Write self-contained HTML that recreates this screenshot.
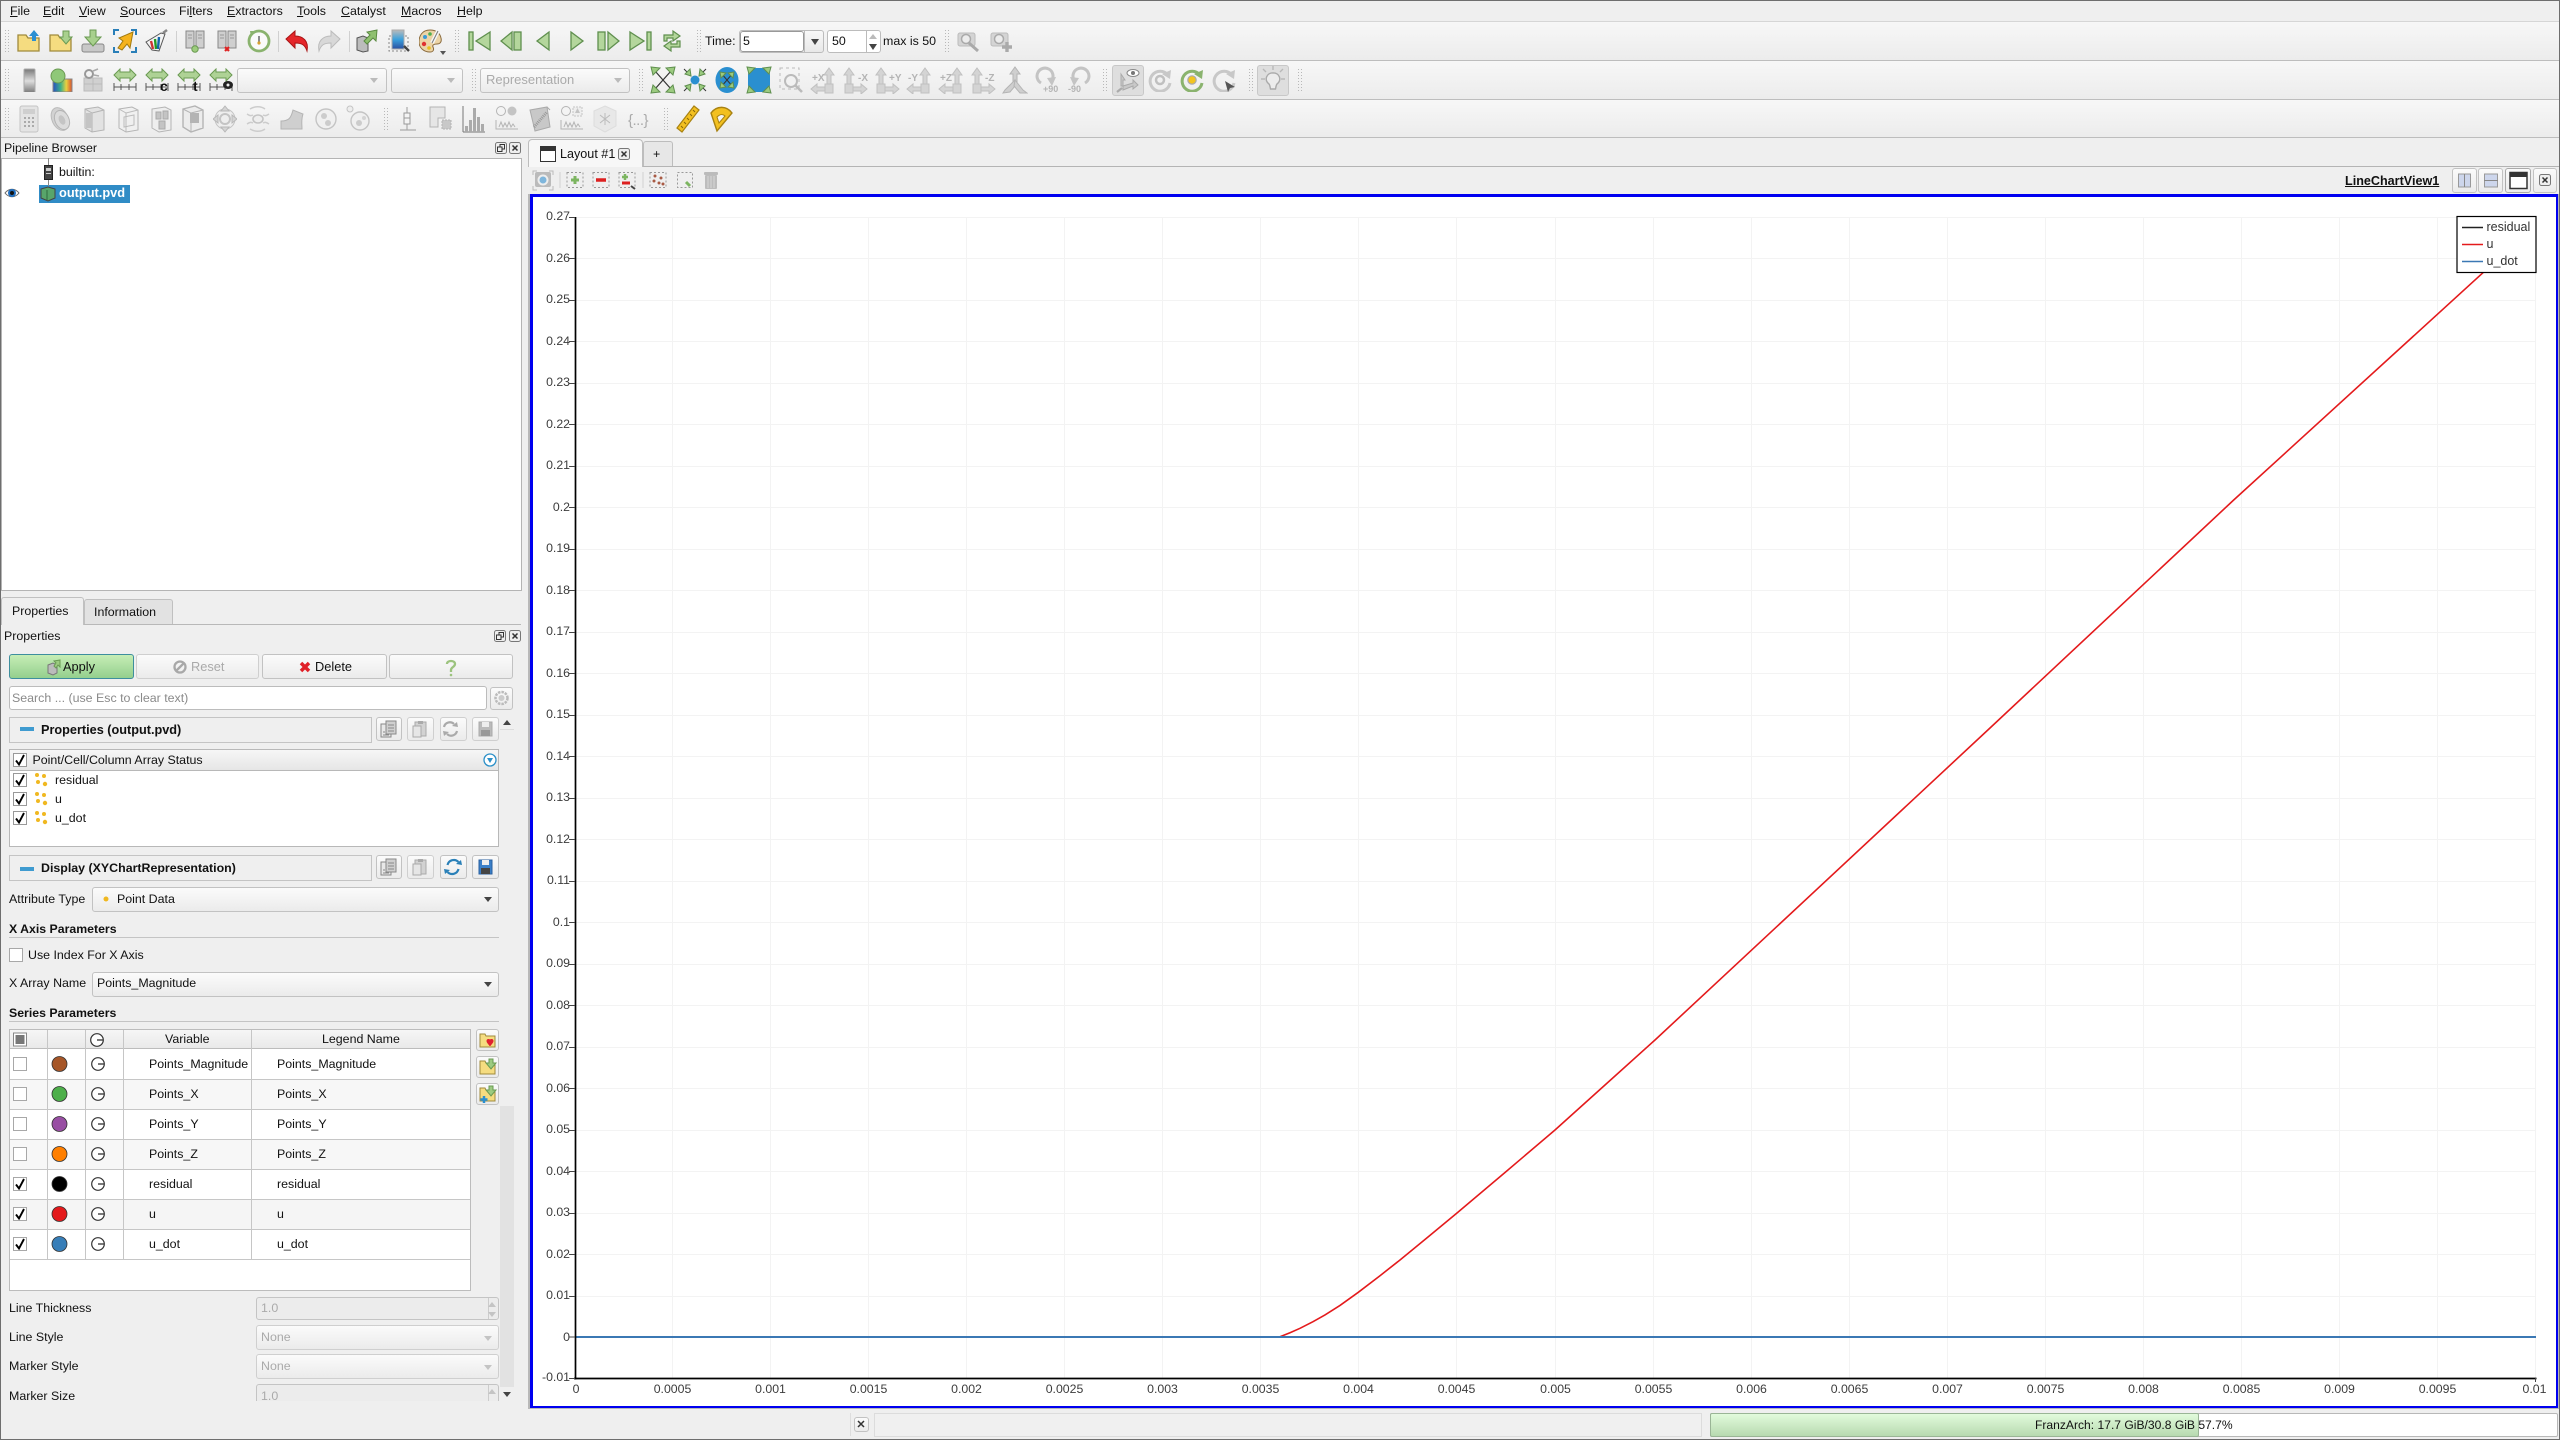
<!DOCTYPE html>
<html><head><meta charset="utf-8"><title>ParaView</title>
<style>
html,body{margin:0;padding:0;background:#efefef}
body{position:relative;width:2560px;height:1440px;overflow:hidden;font:12.4px/16px "Liberation Sans",sans-serif;color:#111}
.t{position:absolute;white-space:pre;line-height:16px}
.g{color:#aaa}
.bd{font-weight:bold;font-size:12.3px}
.b{position:absolute;box-sizing:border-box}
.tb{background:linear-gradient(#f7f7f7,#ececec);border-bottom:1px solid #bdbdbd;left:0;width:2560px}
.btn{border:1px solid #c2c2c2;border-radius:3px;background:linear-gradient(#fbfbfb,#ebebeb)}
.dis{border-color:#cfcfcf}
.ed{background:#fff;border:1px solid #bcbcbc;border-radius:3px}
.chk{background:#fff;border:1px solid #a8a8a8;width:14px;height:14px}
</style></head><body>

<!-- toolbars -->
<div class="b tb" style="top:0;height:22px;background:#efefef;border-bottom:1px solid #d6d6d6"></div>
<div class="b tb" style="top:22px;height:39px"></div>
<div class="b tb" style="top:61px;height:39px"></div>
<div class="b tb" style="top:100px;height:38px"></div>

<!-- toolbar widgets -->
<div class="b ed" style="left:739px;top:30px;width:85px;height:23px;background:linear-gradient(#f8f8f8,#e8e8e8)"></div>
<div class="b ed" style="left:740px;top:31px;width:64px;height:21px;border-color:#999"></div>
<div class="b ed" style="left:827px;top:30px;width:54px;height:23px"></div>
<div class="b btn" style="left:237px;top:68px;width:150px;height:25px"></div>
<div class="b btn" style="left:391px;top:68px;width:72px;height:25px"></div>
<div class="b btn" style="left:480px;top:68px;width:150px;height:25px"></div>
<div class="b" style="left:1112px;top:65px;width:32px;height:31px;background:#dedede;border:1px solid #c8c8c8;border-radius:3px"></div>
<div class="b" style="left:1257px;top:65px;width:32px;height:31px;background:#dedede;border:1px solid #c8c8c8;border-radius:3px"></div>

<!-- pipeline browser -->
<div class="b" style="left:1px;top:158px;width:521px;height:433px;background:#fff;border:1px solid #b4b4b4"></div>
<div class="b" style="left:39px;top:185px;width:91px;height:18px;background:#308cc6"></div>

<!-- central tabs -->
<div class="b" style="left:642px;top:166px;width:1918px;height:1px;background:#b4b4b4"></div>
<div class="b" style="left:528px;top:166px;width:114px;height:1px;background:#f5f5f5"></div>
<div class="b" style="left:528px;top:139px;width:115px;height:28px;background:#f7f7f7;border:1px solid #bdbdbd;border-bottom:0;border-radius:4px 4px 0 0"></div>
<div class="b" style="left:643px;top:141px;width:30px;height:25px;background:#e7e7e7;border:1px solid #bdbdbd;border-bottom:0;border-radius:3px 3px 0 0"></div>
<div class="b btn" style="left:2452px;top:168px;width:25px;height:25px"></div>
<div class="b btn" style="left:2478px;top:168px;width:25px;height:25px"></div>
<div class="b btn" style="left:2505px;top:168px;width:26px;height:25px;border-color:#aaa"></div>
<div class="b btn" style="left:2533px;top:168px;width:24px;height:25px"></div>

<!-- chart -->
<div class="b" style="left:528px;top:194px;width:2031px;height:1215px;background:#b8b8b8;padding:1px"></div>
<div class="b" style="left:530px;top:194px;width:2028px;height:1214px;background:#fff;border:3px solid #0000f0;border-right-width:2px;border-bottom-width:2px"></div>
<svg style="position:absolute;left:0;top:0" width="2560" height="1440" font-family="Liberation Sans, sans-serif">
<path fill="none" stroke="#f3f3f3" stroke-width="1" d="M576 217.5H2536M576 258.5H2536M576 300.5H2536M576 341.5H2536M576 383.5H2536M576 424.5H2536M576 466.5H2536M576 507.5H2536M576 549.5H2536M576 590.5H2536M576 632.5H2536M576 673.5H2536M576 715.5H2536M576 756.5H2536M576 798.5H2536M576 839.5H2536M576 881.5H2536M576 922.5H2536M576 964.5H2536M576 1005.5H2536M576 1047.5H2536M576 1088.5H2536M576 1130.5H2536M576 1171.5H2536M576 1213.5H2536M576 1254.5H2536M576 1296.5H2536
M672.5 217V1378M770.5 217V1378M868.5 217V1378M966.5 217V1378M1064.5 217V1378M1162.5 217V1378M1260.5 217V1378M1358.5 217V1378M1456.5 217V1378M1555.5 217V1378M1653.5 217V1378M1751.5 217V1378M1849.5 217V1378M1947.5 217V1378M2045.5 217V1378M2143.5 217V1378M2241.5 217V1378M2339.5 217V1378M2437.5 217V1378M2535.5 217V1378"/>
<path fill="none" stroke="#e41a1c" stroke-width="1.6" d="M1280 1336.7L1290 1332.7L1300 1328.3L1313 1321.7L1325 1314.9L1340 1305.4L1358.3 1292.3L1380 1275.7L1400 1260L1428 1237L1456.7 1213.3L1505 1172.5L1555 1130L1605 1085L1655 1040L1750 951.6L1990 728L2233.7 500L2483 272.7L2505 252"/>
<rect x="575" y="1336" width="1961" height="2" fill="#3b78b4"/>
<path fill="none" stroke="#000" stroke-width="1.7" d="M575.5 217V1379.5M574 1378.5H2536.5"/>
<path fill="none" stroke="#444" stroke-width="1" d="M569 217.5H575M569 258.5H575M569 300.5H575M569 341.5H575M569 383.5H575M569 424.5H575M569 466.5H575M569 507.5H575M569 549.5H575M569 590.5H575M569 632.5H575M569 673.5H575M569 715.5H575M569 756.5H575M569 798.5H575M569 839.5H575M569 881.5H575M569 922.5H575M569 964.5H575M569 1005.5H575M569 1047.5H575M569 1088.5H575M569 1130.5H575M569 1171.5H575M569 1213.5H575M569 1254.5H575M569 1296.5H575M569 1337H575M569 1378.5H575M2535.5 1378V1382"/>
<g font-size="12.3" fill="#3c3c3c" text-anchor="end">
<text x="570" y="220">0.27</text><text x="570" y="262">0.26</text><text x="570" y="303">0.25</text><text x="570" y="345">0.24</text><text x="570" y="386">0.23</text><text x="570" y="428">0.22</text><text x="570" y="469">0.21</text><text x="570" y="511">0.2</text><text x="570" y="552">0.19</text><text x="570" y="594">0.18</text><text x="570" y="635">0.17</text><text x="570" y="677">0.16</text><text x="570" y="718">0.15</text><text x="570" y="760">0.14</text><text x="570" y="801">0.13</text><text x="570" y="843">0.12</text><text x="570" y="884">0.11</text><text x="570" y="926">0.1</text><text x="570" y="967">0.09</text><text x="570" y="1009">0.08</text><text x="570" y="1050">0.07</text><text x="570" y="1092">0.06</text><text x="570" y="1133">0.05</text><text x="570" y="1175">0.04</text><text x="570" y="1216">0.03</text><text x="570" y="1258">0.02</text><text x="570" y="1299">0.01</text><text x="570" y="1341">0</text><text x="570" y="1381">-0.01</text>
</g>
<g font-size="12.3" fill="#3c3c3c" text-anchor="middle">
<text x="576" y="1393">0</text><text x="672.5" y="1393">0.0005</text><text x="770.5" y="1393">0.001</text><text x="868.5" y="1393">0.0015</text><text x="966.5" y="1393">0.002</text><text x="1064.5" y="1393">0.0025</text><text x="1162.5" y="1393">0.003</text><text x="1260.5" y="1393">0.0035</text><text x="1358.5" y="1393">0.004</text><text x="1456.5" y="1393">0.0045</text><text x="1555.5" y="1393">0.005</text><text x="1653.5" y="1393">0.0055</text><text x="1751.5" y="1393">0.006</text><text x="1849.5" y="1393">0.0065</text><text x="1947.5" y="1393">0.007</text><text x="2045.5" y="1393">0.0075</text><text x="2143.5" y="1393">0.008</text><text x="2241.5" y="1393">0.0085</text><text x="2339.5" y="1393">0.009</text><text x="2437.5" y="1393">0.0095</text><text x="2534.5" y="1393">0.01</text>
</g>
<!-- legend -->
<rect x="2457" y="216.5" width="79" height="56" fill="#fff" stroke="#000" stroke-width="1.2"/>
<path d="M2462 227.5h21" stroke="#222" stroke-width="1.6"/><path d="M2462 244.5h21" stroke="#e41a1c" stroke-width="1.6"/><path d="M2462 261.5h21" stroke="#3b78b4" stroke-width="1.6"/>
<g font-size="12.5" fill="#333"><text x="2486.5" y="231">residual</text><text x="2486.5" y="248">u</text><text x="2486.5" y="265">u_dot</text></g>
</svg>

<!-- status bar -->
<div class="b" style="left:850px;top:1413px;width:1px;height:23px;background:#ddd"></div>
<div class="b btn" style="left:854px;top:1417px;width:15px;height:15px"></div>
<div class="b" style="left:874px;top:1413px;width:828px;height:24px;background:#f0f0f0;border:1px solid #dcdcdc"></div>
<div class="b" style="left:1710px;top:1413px;width:848px;height:24px;background:#fff;border:1px solid #b8b8b8;border-radius:2px"></div>
<div class="b" style="left:1710px;top:1413px;width:489px;height:24px;background:linear-gradient(#e2fbdc,#b7dab0);border:1px solid #9ab596;border-radius:2px"></div>
<div class="t" style="left:2035px;top:1417px;font-size:12.1px">FranzArch: 17.7 GiB/30.8 GiB 57.7%</div>

<!-- properties panel -->
<div class="b" style="left:1px;top:624px;width:520px;height:1px;background:#b8b8b8"></div>
<div class="b" style="left:84px;top:599px;width:89px;height:25px;background:#e2e2e2;border:1px solid #c0c0c0;border-bottom:0;border-radius:3px 3px 0 0"></div>
<div class="b" style="left:1px;top:597px;width:83px;height:28px;background:#efefef;border:1px solid #c0c0c0;border-bottom:0;border-radius:3px 3px 0 0"></div>

<div class="b btn" style="left:9px;top:654px;width:125px;height:25px;background:linear-gradient(#c6eeb6,#94cf8d);border-color:#3e8f9e"></div>
<div class="b btn dis" style="left:136px;top:654px;width:123px;height:25px"></div>
<div class="b btn" style="left:262px;top:654px;width:125px;height:25px"></div>
<div class="b btn" style="left:389px;top:654px;width:124px;height:25px"></div>
<div class="b ed" style="left:9px;top:686px;width:478px;height:24px"></div>
<div class="b btn" style="left:490px;top:687px;width:23px;height:23px"></div>

<div class="b" style="left:9px;top:717px;width:363px;height:26px;background:#efefef;border:1px solid #c4c4c4"></div>
<div class="b btn" style="left:376px;top:717px;width:26px;height:24px"></div>
<div class="b btn dis" style="left:407px;top:717px;width:27px;height:24px"></div>
<div class="b btn dis" style="left:440px;top:717px;width:27px;height:24px"></div>
<div class="b btn dis" style="left:472px;top:717px;width:27px;height:24px"></div>

<div class="b" style="left:9px;top:749px;width:490px;height:98px;background:#fff;border:1px solid #b8b8b8"></div>
<div class="b" style="left:10px;top:750px;width:488px;height:21px;background:linear-gradient(#f6f6f6,#e6e6e6);border-bottom:1px solid #b8b8b8"></div>

<div class="b" style="left:9px;top:855px;width:363px;height:26px;background:#efefef;border:1px solid #c4c4c4"></div>
<div class="b btn" style="left:376px;top:855px;width:26px;height:24px"></div>
<div class="b btn dis" style="left:407px;top:855px;width:27px;height:24px"></div>
<div class="b btn" style="left:440px;top:855px;width:27px;height:24px"></div>
<div class="b btn" style="left:472px;top:855px;width:27px;height:24px"></div>

<div class="b btn" style="left:92px;top:887px;width:407px;height:25px"></div>
<div class="b" style="left:9px;top:937px;width:490px;height:1px;background:#c4c4c4"></div>
<div class="b chk" style="left:9px;top:948px"></div>
<div class="b btn" style="left:92px;top:972px;width:407px;height:25px"></div>
<div class="b" style="left:9px;top:1021px;width:490px;height:1px;background:#c4c4c4"></div>

<!-- scrollbar -->
<div class="b" style="left:500px;top:716px;width:13px;height:685px;background:#efefef"></div>
<div class="b" style="left:500px;top:729px;width:14px;height:1px;background:#dcdcdc"></div>
<div class="b" style="left:500px;top:1106px;width:14px;height:281px;background:#e2e2e2"></div>

<!-- series table -->
<div class="b" style="left:9px;top:1029px;width:462px;height:262px;background:#fff;border:1px solid #bcbcbc"></div>
<div class="b" style="left:10px;top:1030px;width:460px;height:19px;background:linear-gradient(#f6f6f6,#e9e9e9);border-bottom:1px solid #bcbcbc"></div>
<div class="b" style="left:10px;top:1080px;width:460px;height:29px;background:#f7f7f7"></div>
<div class="b" style="left:10px;top:1140px;width:460px;height:29px;background:#f7f7f7"></div>
<div class="b" style="left:10px;top:1200px;width:460px;height:29px;background:#f5f5f5"></div>
<svg style="position:absolute;left:0;top:0" width="520" height="1300">
<path stroke="#c6c6c6" fill="none" d="M47.5 1030V1259M85.5 1030V1259M123.5 1030V1259M251.5 1030V1259M10 1079.5H470M10 1109.5H470M10 1139.5H470M10 1169.5H470M10 1199.5H470M10 1229.5H470M10 1259.5H470"/>
</svg>
<div class="b btn" style="left:476px;top:1029px;width:23px;height:22px"></div>
<div class="b btn" style="left:476px;top:1056px;width:23px;height:22px"></div>
<div class="b btn" style="left:476px;top:1083px;width:23px;height:22px"></div>
<div class="b chk" style="left:13px;top:1057px"></div>
<div class="b chk" style="left:13px;top:1087px"></div>
<div class="b chk" style="left:13px;top:1117px"></div>
<div class="b chk" style="left:13px;top:1147px"></div>
<div class="b chk" style="left:13px;top:1177px"></div>
<div class="b chk" style="left:13px;top:1207px"></div>
<div class="b chk" style="left:13px;top:1237px"></div>

<!-- disabled fields -->
<div class="b btn" style="left:256px;top:1297px;width:243px;height:23px;background:#ececec;border-color:#c4c4c4"></div>
<div class="b btn dis" style="left:256px;top:1325px;width:243px;height:25px"></div>
<div class="b btn dis" style="left:256px;top:1354px;width:243px;height:25px"></div>
<div class="b btn" style="left:256px;top:1384px;width:243px;height:23px;background:#ececec;border-color:#c4c4c4"></div>
<div class="b" style="left:1px;top:1401px;width:520px;height:38px;background:#efefef"></div>

<!-- window frame -->
<div class="b" style="left:0;top:0;width:2560px;height:1440px;border:1px solid #6e6e6e"></div>

<!-- ICONS -->
<svg style="position:absolute;left:0;top:0" width="2560" height="1440" font-family="Liberation Sans, sans-serif">
<defs>
<linearGradient id="gb" x1="0" y1="0" x2="0" y2="1"><stop offset="0" stop-color="#bbb"/><stop offset=".5" stop-color="#3aa0dc"/><stop offset="1" stop-color="#2a4fa0"/></linearGradient>
<linearGradient id="gr" x1="0" y1="0" x2="0" y2="1"><stop offset="0" stop-color="#777"/><stop offset=".5" stop-color="#ddd"/><stop offset="1" stop-color="#777"/></linearGradient>
<linearGradient id="rb" x1="0" y1="0" x2="1" y2="0"><stop offset="0" stop-color="#2a4fc0"/><stop offset=".4" stop-color="#3ab08a"/><stop offset=".7" stop-color="#e8d040"/><stop offset="1" stop-color="#d85030"/></linearGradient>

<symbol id="hd" width="6" height="24" viewBox="0 0 6 24"><path d="M1.5 1V23M4.5 1V23" stroke="#b8b8b8" stroke-dasharray="1 2" fill="none"/></symbol>
<symbol id="oU" width="24" height="24" viewBox="0 0 24 24"><path d="M1 22V6h8l2 3h11v13z" fill="#f5dc80" stroke="#a08a3c" stroke-width="1.3"/><polygon points="17,1 22,7 19,7 19,12 15,12 15,7 12,7" fill="#2b8fd2"/></symbol>
<symbol id="oD" width="24" height="24" viewBox="0 0 24 24"><path d="M1 22V6h8l2 3h11v13z" fill="#f5dc80" stroke="#a08a3c" stroke-width="1.3"/><polygon points="14,2 20,2 20,8 23,8 17,15 11,8 14,8" fill="#a8d08d" stroke="#6a9a52"/></symbol>
<symbol id="sv" width="24" height="24" viewBox="0 0 24 24"><rect x="1" y="15" width="22" height="8" rx="2" fill="#c8c8c8" stroke="#888"/><polygon points="9,1 15,1 15,8 20,8 12,17 4,8 9,8" fill="#a8d08d" stroke="#6a9a52"/></symbol>
<symbol id="cn" width="24" height="24" viewBox="0 0 24 24"><path d="M1 6V1h5M18 1h5v5M1 18v5h5M18 23h5v-5" stroke="#2a7fb8" stroke-width="2" fill="none"/><polygon points="20,3 6,9 10,12 5,19 9,21 14,15 17,19" fill="#f5b31d" stroke="#a07a10"/></symbol>
<symbol id="fl" width="24" height="24" viewBox="0 0 24 24"><polygon points="1,13 16,4 20,5 14,22 7,21" fill="#f4f4f4" stroke="#555"/><path d="M6 12L8 20" stroke="#c33" stroke-width="2.4"/><path d="M10 10L11 20" stroke="#292" stroke-width="2.4"/><path d="M14 8L13 20" stroke="#16a" stroke-width="2.4"/><path d="M18 4L22 1" stroke="#888" stroke-width="2.5"/></symbol>
<symbol id="sg" width="24" height="24" viewBox="0 0 24 24"><rect x="3" y="2" width="8" height="17" fill="#cfcfcf" stroke="#888"/><rect x="13" y="2" width="8" height="17" fill="#cfcfcf" stroke="#888"/><path d="M5 6h4M5 9h4M15 6h4M15 9h4" stroke="#999"/><circle cx="12" cy="20" r="3.2" fill="#9ccc7c" stroke="#6a9a52"/></symbol>
<symbol id="sr" width="24" height="24" viewBox="0 0 24 24"><rect x="3" y="2" width="8" height="17" fill="#cfcfcf" stroke="#888"/><rect x="13" y="2" width="8" height="17" fill="#cfcfcf" stroke="#888"/><path d="M5 6h4M5 9h4M15 6h4M15 9h4" stroke="#999"/><path d="M10 18l4 4M14 18l-4 4" stroke="#d22" stroke-width="2.2"/></symbol>
<symbol id="ck" width="24" height="24" viewBox="0 0 24 24"><circle cx="12" cy="12" r="10" fill="#fafafa" stroke="#8ab36e" stroke-width="2.8"/><path d="M12 7v6" stroke="#666" stroke-width="1.5"/><circle cx="12" cy="14" r="1.6" fill="#d8a030"/><polygon points="3,2 9,2 4,8" fill="#8ab36e"/></symbol>
<symbol id="un" width="24" height="24" viewBox="0 0 24 24"><path d="M1 10L10 2v5c8 0 14 5 12 15-2-6-5-8-12-8v5z" fill="#e5262a" stroke="#a81414"/></symbol>
<symbol id="re" width="24" height="24" viewBox="0 0 24 24"><path d="M23 10L14 2v5C6 7 0 12 2 22c2-6 5-8 12-8v5z" fill="#d8d8d8" stroke="#bbb"/></symbol>
<symbol id="cu" width="24" height="24" viewBox="0 0 24 24"><path d="M3 9l6-2 5 2v13l-5 1-6-2z" fill="#bcbcbc" stroke="#555"/><polygon points="23,1 13,3 16,6 10,12 13,15 19,9 22,12" fill="#8fc06f" stroke="#5a8a40"/></symbol>
<symbol id="gd" width="24" height="24" viewBox="0 0 24 24"><rect x="2" y="7" width="19" height="15" fill="none" stroke="#888" stroke-dasharray="2 2"/><rect x="5" y="1" width="12" height="19" fill="url(#gb)" stroke="#aaa"/><path d="M17 17l5 5" stroke="#444" stroke-width="2.4"/></symbol>
<symbol id="pa" width="24" height="24" viewBox="0 0 24 24"><path d="M11 1C3 1 0 7 0 13c0 6 5 10 11 10 4 0 4-3 3-5s1-3 4-3 5-2 4-6C21 4 17 1 11 1z" fill="#ecd4a6" stroke="#8a6a3c"/><circle cx="6" cy="8" r="2" fill="#3a9ad8"/><circle cx="5" cy="15" r="2.2" fill="#e03030"/><circle cx="10" cy="19" r="1.8" fill="#e8c020"/><circle cx="11" cy="5" r="1.8" fill="#50b050"/><path d="M19 2l-6 12" stroke="#f5f5f5" stroke-width="4"/><path d="M19 2l-6 12" stroke="#777" stroke-width="1" fill="none"/></symbol>

<symbol id="v1" width="24" height="24" viewBox="0 0 24 24"><g fill="#b4d69c" stroke="#5f8f4e" stroke-width="1.3"><rect x="1" y="3" width="4" height="18"/><polygon points="22,3 8,12 22,21"/></g></symbol>
<symbol id="v2" width="24" height="24" viewBox="0 0 24 24"><g fill="#b4d69c" stroke="#5f8f4e" stroke-width="1.3"><polygon points="12,3 1,12 12,21"/><rect x="14" y="3" width="7" height="18"/></g></symbol>
<symbol id="v3" width="24" height="24" viewBox="0 0 24 24"><polygon points="18,3 6,12 18,21" fill="#b4d69c" stroke="#5f8f4e" stroke-width="1.3"/></symbol>
<symbol id="v4" width="24" height="24" viewBox="0 0 24 24"><polygon points="6,3 18,12 6,21" fill="#b4d69c" stroke="#5f8f4e" stroke-width="1.3"/></symbol>
<symbol id="v5" width="24" height="24" viewBox="0 0 24 24"><g fill="#b4d69c" stroke="#5f8f4e" stroke-width="1.3"><rect x="2" y="3" width="7" height="18"/><polygon points="12,3 23,12 12,21"/></g></symbol>
<symbol id="v6" width="24" height="24" viewBox="0 0 24 24"><g fill="#b4d69c" stroke="#5f8f4e" stroke-width="1.3"><polygon points="2,3 16,12 2,21"/><rect x="19" y="3" width="4" height="18"/></g></symbol>
<symbol id="v7" width="24" height="24" viewBox="0 0 24 24"><g fill="#b4d69c" stroke="#5f8f4e" stroke-width="1.2"><path d="M4 12V6h9V2l7 5-7 5V9H7v3z"/><path d="M20 12v6h-9v4l-7-5 7-5v3h6v-3z"/></g></symbol>
<symbol id="cz" width="24" height="24" viewBox="0 0 24 24"><rect x="2" y="4" width="17" height="13" rx="2" fill="#d4d4d4" stroke="#bbb"/><circle cx="10" cy="10" r="4.5" fill="#ececec" stroke="#aaa" stroke-width="1.5"/><path d="M13 14l9 8" stroke="#aaa" stroke-width="3"/></symbol>
<symbol id="cp" width="24" height="24" viewBox="0 0 24 24"><rect x="2" y="4" width="17" height="13" rx="2" fill="#d4d4d4" stroke="#bbb"/><circle cx="10" cy="10" r="4.5" fill="#ececec" stroke="#aaa" stroke-width="1.5"/><path d="M18 13v10M13 18h10" stroke="#aaa" stroke-width="3.4"/></symbol>

<symbol id="cb" width="24" height="24" viewBox="0 0 24 24"><rect x="7" y="1" width="11" height="24" rx="1" fill="url(#gr)" stroke="#aaa"/></symbol>
<symbol id="rn" width="24" height="24" viewBox="0 0 24 24"><rect x="4" y="11" width="19" height="13" fill="url(#rb)" stroke="#888"/><circle cx="9" cy="8" r="7" fill="#8fc878" stroke="#6a9a52"/></symbol>
<symbol id="lk" width="24" height="24" viewBox="0 0 24 24"><rect x="3" y="10" width="18" height="13" fill="#d0d0d0" stroke="#bbb"/><path d="M12 10v13M3 16h18" stroke="#bbb"/><circle cx="8" cy="6" r="4" fill="none" stroke="#999" stroke-width="2"/><path d="M12 3l5-2M13 7l5 1" stroke="#aaa" stroke-width="1.5"/></symbol>
<symbol id="rs" width="24" height="24" viewBox="0 0 24 24"><polygon points="1,7 7,1 7,4 17,4 17,1 23,7 17,13 17,10 7,10 7,13" fill="#aed295" stroke="#6a9a52"/><path d="M1 15v8M1 19h22M23 15v8M8 16v6M16 16v6" stroke="#555" fill="none"/></symbol>

<symbol id="r1" width="26" height="28" viewBox="0 0 26 28"><path d="M5 5L21 23M21 5L5 23" stroke="#333" stroke-width="1.2"/><g fill="#9ccb80" stroke="#5f8f4e"><polygon points="1,1 10,2 3,9"/><polygon points="25,1 16,2 23,9"/><polygon points="1,27 10,26 3,19"/><polygon points="25,27 16,26 23,19"/></g></symbol>
<symbol id="r2" width="26" height="28" viewBox="0 0 26 28"><circle cx="13" cy="14" r="4.5" fill="#2a8fd0"/><path d="M2 3l7 7M24 3l-7 7M2 25l7-7M24 25l-7-7" stroke="#333"/><g fill="#9ccb80" stroke="#5f8f4e"><polygon points="9,10 8,3 3,8"/><polygon points="17,10 18,3 23,8"/><polygon points="9,18 8,25 3,20"/><polygon points="17,18 18,25 23,20"/></g></symbol>
<symbol id="r3" width="26" height="28" viewBox="0 0 26 28"><ellipse cx="13" cy="14" rx="11.5" ry="13" fill="#2a8fd0"/><path d="M7 7l12 14M19 7L7 21" stroke="#333"/><g fill="#9ccb80" stroke="#5f8f4e"><polygon points="6,6 12,7 7,12"/><polygon points="20,6 14,7 19,12"/><polygon points="6,22 12,21 7,16"/><polygon points="20,22 14,21 19,16"/></g></symbol>
<symbol id="r4" width="26" height="28" viewBox="0 0 26 28"><rect x="2" y="2" width="22" height="24" rx="7" fill="#2a8fd0"/><g fill="#9ccb80" stroke="#5f8f4e"><polygon points="1,1 9,2 3,8"/><polygon points="25,1 17,2 23,8"/><polygon points="1,27 9,26 3,20"/><polygon points="25,27 17,26 23,20"/></g></symbol>
<symbol id="r5" width="26" height="28" viewBox="0 0 26 28"><rect x="1" y="2" width="19" height="21" fill="none" stroke="#bbb" stroke-dasharray="3 3"/><circle cx="12" cy="15" r="6" fill="#f2f2f2" stroke="#bbb" stroke-width="2"/><path d="M16 19l7 7" stroke="#bbb" stroke-width="2.6"/></symbol>
<symbol id="ar" width="26" height="28" viewBox="0 0 26 28"><g fill="#d4d4d4" stroke="#c0c0c0"><polygon points="19,2 24,9 21,9 21,19 17,19 17,9 14,9"/><rect x="15" y="18" width="8" height="9"/><polygon points="1,23 7,18 7,21 15,21 15,25 7,25 7,28"/></g></symbol>
<symbol id="am" width="26" height="28" viewBox="0 0 26 28"><g fill="#d4d4d4" stroke="#c0c0c0"><polygon points="7,2 12,9 9,9 9,19 5,19 5,9 2,9"/><rect x="3" y="18" width="8" height="9"/><polygon points="25,23 19,18 19,21 11,21 11,25 19,25 19,28"/></g></symbol>
<symbol id="a3" width="26" height="28" viewBox="0 0 26 28"><g fill="#cfcfcf" stroke="#b4b4b4"><polygon points="13,1 18,8 15,8 15,16 11,16 11,8 8,8"/><polygon points="13,14 3,24 1,27 8,26 13,20"/><polygon points="13,14 21,24 25,27 18,27 12,20"/></g></symbol>
<symbol id="p9" width="26" height="28" viewBox="0 0 26 28"><path d="M7 17a8 8 0 1 1 11-3" fill="none" stroke="#c4c4c4" stroke-width="3"/><polygon points="13,12 22,11 18,20" fill="#c4c4c4"/></symbol>
<symbol id="m9" width="26" height="28" viewBox="0 0 26 28"><path d="M19 17a8 8 0 1 0-11-3" fill="none" stroke="#c4c4c4" stroke-width="3"/><polygon points="13,12 4,11 8,20" fill="#c4c4c4"/></symbol>
<symbol id="ro" width="24" height="24" viewBox="0 0 24 24"><path d="M20 7a10 10 0 1 0 2 8" fill="none" stroke="#c8c8c8" stroke-width="3"/><circle cx="12" cy="12" r="4" fill="none" stroke="#c0c0c0" stroke-width="2.5"/><polygon points="14,6 23,2 22,11" fill="#c8c8c8"/></symbol>
<symbol id="rg" width="24" height="24" viewBox="0 0 24 24"><path d="M20 7a10 10 0 1 0 2 8" fill="none" stroke="#8ab36e" stroke-width="3"/><circle cx="12" cy="12" r="4.2" fill="#f2c420" stroke="#aaa" stroke-width="1.2"/><polygon points="14,6 23,2 22,11" fill="#8ab36e"/></symbol>
<symbol id="rc" width="24" height="24" viewBox="0 0 24 24"><path d="M20 7a10 10 0 1 0 2 8" fill="none" stroke="#c8c8c8" stroke-width="3"/><polygon points="14,6 23,2 22,11" fill="#c8c8c8"/><polygon points="13,13 23,19 18,20 16,24" fill="#555"/></symbol>
<symbol id="bl" width="24" height="28" viewBox="0 0 24 28"><path d="M12 7a6 6 0 0 0-4 11c1 1 1 3 1.500 5h5c.5-2 .5-4 1.500-5a6 6 0 0 0-4-11z" fill="#ececec" stroke="#aaa" stroke-width="1.400"/><path d="M12 0v4M2 3l3 3M22 3l-3 3M0 13h4M24 13h-4" stroke="#b8b8b8" stroke-width="1.400"/></symbol>
<symbol id="ve" width="26" height="28" viewBox="0 0 26 28"><g fill="#c8c8c8" stroke="#aaa"><polygon points="6,8 10,14 8,14 8,20 6,20"/><polygon points="8,20 18,17 18,14 23,19 18,23 18,20 8,24"/><path d="M7 22L2 26" stroke-width="2.2"/></g><ellipse cx="18" cy="7" rx="6" ry="3.500" fill="#fff" stroke="#888"/><circle cx="18" cy="7" r="2" fill="#777"/></symbol>

<symbol id="f1" width="24" height="28" viewBox="0 0 24 28"><rect x="3" y="1" width="18" height="26" rx="2" fill="#e4e4e4" stroke="#c4c4c4"/><rect x="6" y="4" width="12" height="5" fill="#cfcfcf"/><path d="M7 13h2M11 13h2M15 13h2M7 17h2M11 17h2M15 17h2M7 21h2M11 21h2M15 21h2" stroke="#aaa" stroke-width="2"/></symbol>
<symbol id="f2" width="24" height="28" viewBox="0 0 24 28"><ellipse cx="11" cy="14" rx="8" ry="12" fill="#d2d2d2" stroke="#bbb" transform="rotate(-25 11 14)"/><ellipse cx="13" cy="15" rx="7" ry="10" fill="#dcdcdc" stroke="#b4b4b4" transform="rotate(-25 13 15)"/><ellipse cx="13" cy="15" rx="3" ry="5" fill="#c4c4c4" transform="rotate(-25 13 15)"/></symbol>
<symbol id="f3" width="24" height="28" viewBox="0 0 24 28"><path d="M3 4l13-2 6 3v20l-12 2-7-4z" fill="#e2e2e2" stroke="#b4b4b4"/><path d="M3 4l7 4v19M10 8l12-3" fill="none" stroke="#b4b4b4"/><rect x="4" y="8" width="6" height="15" fill="#c4c4c4"/></symbol>
<symbol id="f4" width="24" height="28" viewBox="0 0 24 28"><path d="M3 4l13-2 6 3v20l-12 2-7-4z" fill="#f0f0f0" stroke="#b4b4b4"/><path d="M3 4l7 4v19M10 8l12-3M8 12l10-2v10l-10 2z" fill="none" stroke="#bbb"/></symbol>
<symbol id="f5" width="24" height="28" viewBox="0 0 24 28"><path d="M3 4l13-2 6 3v20l-12 2-7-4z" fill="#eee" stroke="#b4b4b4"/><path d="M7 7h5v7H7zM14 6h5v8h-5zM10 16h6v8h-6z" fill="#c4c4c4" stroke="#aaa"/></symbol>
<symbol id="f6" width="24" height="28" viewBox="0 0 24 28"><path d="M2 4l12-3 8 4v18l-12 4-8-5z" fill="#ececec" stroke="#b4b4b4" stroke-width="1.400"/><rect x="9" y="8" width="9" height="10" fill="#b4b4b4"/><path d="M2 4l8 4v19M10 8l12-3" fill="none" stroke="#b4b4b4"/></symbol>
<symbol id="f7" width="24" height="28" viewBox="0 0 24 28"><circle cx="12" cy="14" r="10" fill="#eee" stroke="#c4c4c4"/><path d="M12 1l4 5h-8zM12 27l4-5H8zM0 14l5-4v8zM24 14l-5-4v8z" fill="#d4d4d4" stroke="#b8b8b8"/><circle cx="12" cy="14" r="5" fill="none" stroke="#c4c4c4" stroke-width="2"/></symbol>
<symbol id="f8" width="24" height="28" viewBox="0 0 24 28"><ellipse cx="12" cy="14" rx="5" ry="4" fill="#eee" stroke="#c4c4c4" stroke-width="1.600"/><path d="M4 4c5-3 11-3 15 0M1 9c3 2 4 2 6 1M17 10c2 1 3 1 6-1M1 19c3-2 4-2 6-1M17 18c2-1 3-1 6 1M4 24c5 3 11 3 15 0" fill="none" stroke="#ccc" stroke-width="1.500"/></symbol>
<symbol id="f9" width="24" height="28" viewBox="0 0 24 28"><path d="M1 24V16c8 0 10-3 12-11l10 4c-2 6-1 10-1 15z" fill="#cfcfcf" stroke="#b4b4b4"/></symbol>
<symbol id="fa" width="24" height="28" viewBox="0 0 24 28"><circle cx="12" cy="14" r="10" fill="#f0f0f0" stroke="#c4c4c4" stroke-width="1.400"/><circle cx="10" cy="11" r="3" fill="#ccc"/><circle cx="14" cy="18" r="3" fill="#ccc"/></symbol>
<symbol id="fb" width="24" height="28" viewBox="0 0 24 28"><circle cx="14" cy="16" r="9" fill="#f0f0f0" stroke="#c4c4c4" stroke-width="1.400"/><circle cx="13" cy="18" r="3" fill="#ccc"/><circle cx="4" cy="4" r="3" fill="#eee" stroke="#c4c4c4"/><circle cx="18" cy="13" r="2" fill="#d4d4d4"/></symbol>
<symbol id="fc" width="24" height="28" viewBox="0 0 24 28"><path d="M5 25H21M12 2V25" stroke="#aaa" stroke-width="1.200"/><rect x="9" y="8" width="6" height="11" fill="#f4f4f4" stroke="#999"/><path d="M9 13h6" stroke="#999"/></symbol>
<symbol id="fd" width="24" height="28" viewBox="0 0 24 28"><path d="M2 2h15v11h-7v9H2z" fill="#e6e6e6" stroke="#b4b4b4"/><rect x="14" y="15" width="9" height="9" fill="#c8c8c8" stroke="#b4b4b4" stroke-dasharray="2 1"/></symbol>
<symbol id="fe" width="24" height="28" viewBox="0 0 24 28"><path d="M1 27V1M1 27H23" stroke="#777"/><g fill="#aaa"><rect x="3" y="21" width="3" height="6"/><rect x="7" y="15" width="3" height="12"/><rect x="11" y="3" width="3" height="24"/><rect x="15" y="12" width="3" height="15"/><rect x="19" y="19" width="3" height="8"/></g></symbol>
<symbol id="ff" width="24" height="28" viewBox="0 0 24 28"><circle cx="6" cy="6" r="4.500" fill="#f4f4f4" stroke="#b4b4b4"/><circle cx="17" cy="6" r="4.500" fill="#c4c4c4"/><path d="M1 15V24H23M4 22l2-5 2 5 2-4 2 4 2-5 2 5 2-3 2 3" fill="none" stroke="#b4b4b4"/></symbol>
<symbol id="fg" width="24" height="28" viewBox="0 0 24 28"><path d="M2 5l17-3 3 20-15 4z" fill="#c8c8c8" stroke="#aaa"/><path d="M6 22L19 7" stroke="#999" stroke-width="3" stroke-dasharray="1 1"/><path d="M19 2l3 3" stroke="#aaa"/></symbol>
<symbol id="fh" width="24" height="28" viewBox="0 0 24 28"><circle cx="6" cy="6" r="4.500" fill="#f4f4f4" stroke="#b4b4b4"/><rect x="13" y="2" width="9" height="9" fill="#eee" stroke="#c4c4c4" stroke-dasharray="2 1"/><polygon points="17.500,3 20,8 15,8" fill="#c4c4c4"/><path d="M1 15V24H23M4 22l2-5 2 5 2-4 2 4 2-5 2 5 2-3 2 3" fill="none" stroke="#b4b4b4"/></symbol>
<symbol id="fi" width="24" height="28" viewBox="0 0 24 28"><polygon points="12,1 23,6 23,21 12,27 1,21 1,6" fill="#e8e8e8" stroke="#ddd"/><path d="M12 8v12M7 10l10 8M17 10L7 18" stroke="#bbb"/></symbol>
<symbol id="ru" width="24" height="28" viewBox="0 0 24 28"><polygon points="18,1 23,5 6,27 1,23" fill="#f3c020" stroke="#a88212" stroke-width="1.200"/><path d="M17 5l2 2M14 9l2 2M11 13l2 2M8 17l2 2M5 21l2 2" stroke="#87660a"/></symbol>
<symbol id="pr" width="24" height="28" viewBox="0 0 24 28"><path d="M2 8C8 0 18 1 23 8L8 26z" fill="#f3c020" stroke="#a88212" stroke-width="1.400"/><path d="M8 12c3-3 6-3 8-1l-6 7z" fill="#f4f4f4" stroke="#a88212"/></symbol>

<symbol id="ws" width="12" height="12" viewBox="0 0 12 12"><rect x=".5" y=".5" width="11" height="11" rx="2" fill="#eee" stroke="#777"/><path d="M3.500 3.500l5 5M8.500 3.500l-5 5" stroke="#333" stroke-width="1.500"/></symbol>
<symbol id="wf" width="12" height="12" viewBox="0 0 12 12"><rect x=".5" y=".5" width="11" height="11" rx="2" fill="#eee" stroke="#777"/><rect x="5" y="2.500" width="4.500" height="4.500" fill="none" stroke="#333"/><rect x="2.500" y="5" width="4.500" height="4.500" fill="#eee" stroke="#333"/></symbol>
<symbol id="cm" width="14" height="14" viewBox="0 0 14 14"><path d="M3 7.500l3 4L11 2" fill="none" stroke="#000" stroke-width="1.900"/></symbol>
<symbol id="dt" width="16" height="16" viewBox="0 0 16 16"><g fill="#f0b820"><circle cx="3" cy="3" r="2"/><circle cx="10" cy="4" r="2"/><circle cx="4" cy="10" r="2"/><circle cx="11" cy="12" r="2.200"/></g></symbol>
<symbol id="se" width="16" height="16" viewBox="0 0 16 16"><circle cx="8" cy="8" r="6.300" fill="#fff" stroke="#333" stroke-width="1.200"/><path d="M8 8h6" stroke="#333" stroke-width="1.300"/></symbol>
<symbol id="cpy" width="18" height="18" viewBox="0 0 18 18"><rect x="1" y="4" width="10" height="13" fill="#e8e8e8" stroke="#888"/><rect x="6" y="1" width="10" height="13" fill="#cfcfcf" stroke="#888"/><path d="M8 5h6M8 8h6M8 11h6M3 12h2M3 15h6" stroke="#888"/></symbol>
<symbol id="pst" width="18" height="18" viewBox="0 0 18 18"><rect x="3" y="2" width="11" height="14" fill="#d2d2d2" stroke="#aaa"/><rect x="6" y="1" width="5" height="3" fill="#aaa"/><rect x="1" y="6" width="8" height="11" fill="#e6e6e6" stroke="#aaa"/></symbol>
</defs>

<!-- row 1 -->
<use href="#hd" x="4" y="29"/>
<use href="#oU" x="17" y="29"/><use href="#oD" x="49" y="29"/><use href="#sv" x="81" y="29"/><use href="#cn" x="113" y="29"/><use href="#fl" x="145" y="29"/>
<path d="M176.500 31V52M278.500 31V52M349.500 31V52" stroke="#d0d0d0"/>
<use href="#sg" x="183" y="29"/><use href="#sr" x="215" y="29"/><use href="#ck" x="247" y="29"/>
<use href="#un" x="285" y="29"/><use href="#re" x="317" y="29"/>
<use href="#cu" x="354" y="29"/><use href="#gd" x="387" y="29"/><use href="#pa" x="419" y="29"/>
<polygon points="440,51 446,51 443,55" fill="#555"/>
<use href="#hd" x="454" y="29"/>
<use href="#v1" x="468" y="29"/><use href="#v2" x="500" y="29"/><use href="#v3" x="531" y="29"/><use href="#v4" x="565" y="29"/><use href="#v5" x="596" y="29"/><use href="#v6" x="628" y="29"/><use href="#v7" x="660" y="29"/>
<use href="#hd" x="696" y="29"/>
<polygon points="811,39 819,39 815,45" fill="#444"/>
<polygon points="869,39 877,39 873,34" fill="#bbb"/><polygon points="869,44 877,44 873,50" fill="#444"/>
<path d="M804.500 31V52M866.500 31V52" stroke="#bbb"/>
<use href="#hd" x="944" y="29"/>
<use href="#cz" x="956" y="29"/><use href="#cp" x="989" y="29"/>

<!-- row 2 -->
<use href="#hd" x="4" y="68"/>
<use href="#cb" x="17" y="68"/><use href="#rn" x="49" y="68"/><use href="#lk" x="81" y="68"/>
<use href="#rs" x="113" y="68"/><use href="#rs" x="145" y="68"/><use href="#rs" x="177" y="68"/><use href="#rs" x="209" y="68"/>
<text x="160" y="91" font-size="14" font-weight="bold" fill="#111">c</text><text x="193" y="91" font-size="14" font-weight="bold" fill="#111">t</text>
<ellipse cx="228" cy="85" rx="5" ry="4" fill="#222"/><circle cx="228" cy="85" r="1.500" fill="#eee"/>
<polygon points="370,78 378,78 374,83" fill="#bbb"/><polygon points="447,78 455,78 451,83" fill="#bbb"/><polygon points="614,78 622,78 618,83" fill="#bbb"/>
<use href="#hd" x="471" y="68"/><use href="#hd" x="638" y="68"/>
<use href="#r1" x="650" y="66"/><use href="#r2" x="682" y="66"/><use href="#r3" x="714" y="66"/><use href="#r4" x="746" y="66"/><use href="#r5" x="779" y="66"/>
<use href="#ar" x="810" y="66"/><use href="#am" x="842" y="66"/><use href="#am" x="874" y="66"/><use href="#ar" x="906" y="66"/><use href="#ar" x="938" y="66"/><use href="#am" x="970" y="66"/><use href="#a3" x="1002" y="66"/><use href="#p9" x="1034" y="66"/><use href="#m9" x="1066" y="66"/>
<g font-size="10" fill="#b4b4b4" font-weight="bold">
<text x="812" y="81">+X</text><text x="858" y="81">-X</text><text x="889" y="81">+Y</text><text x="908" y="81">-Y</text><text x="940" y="81">+Z</text><text x="985" y="81">-Z</text>
<text x="1043" y="92" font-size="9">+90</text><text x="1068" y="92" font-size="9">-90</text></g>
<use href="#hd" x="1102" y="68"/>
<use href="#ve" x="1115" y="66"/><use href="#ro" x="1148" y="68"/><use href="#rg" x="1180" y="68"/><use href="#rc" x="1212" y="68"/>
<use href="#hd" x="1248" y="68"/><use href="#bl" x="1261" y="66"/><use href="#hd" x="1297" y="68"/>

<!-- row 3 -->
<use href="#hd" x="4" y="107"/>
<use href="#f1" x="17" y="105"/><use href="#f2" x="49" y="105"/><use href="#f3" x="82" y="105"/><use href="#f4" x="116" y="105"/><use href="#f5" x="149" y="105"/><use href="#f6" x="181" y="105"/><use href="#f7" x="213" y="105"/><use href="#f8" x="246" y="105"/><use href="#f9" x="280" y="105"/><use href="#fa" x="314" y="105"/><use href="#fb" x="346" y="105"/>
<use href="#hd" x="383" y="107"/>
<use href="#fc" x="395" y="105"/><use href="#fd" x="428" y="105"/><use href="#fe" x="462" y="105"/><use href="#ff" x="495" y="105"/><use href="#fg" x="528" y="105"/><use href="#fh" x="560" y="105"/><use href="#fi" x="593" y="105"/>
<text x="628" y="125" font-size="15" fill="#aaa" letter-spacing="-.5">{...}</text>
<use href="#hd" x="663" y="107"/>
<use href="#ru" x="676" y="105"/><use href="#pr" x="709" y="105"/>

<!-- dock title icons -->
<use href="#wf" x="495" y="142"/><use href="#ws" x="509" y="142"/>
<use href="#wf" x="494" y="630"/><use href="#ws" x="509" y="630"/>

<!-- pipeline tree -->
<path d="M48.500 158V165M48.500 179V186" stroke="#888"/>
<rect x="44.500" y="165.500" width="8" height="14" fill="#444" stroke="#222"/><rect x="46" y="168" width="5" height="3" fill="#ccc"/><rect x="46" y="173" width="5" height="1" fill="#ccc"/>
<path d="M41 189l7-2 7 2v9l-7 3-7-3z" fill="#58a56a" stroke="#444"/><path d="M47 190v10" stroke="#2e6a40"/>
<path d="M5 193c4-5 10-5 14 0-4 5-10 5-14 0z" fill="#fff" stroke="#666"/><circle cx="12" cy="193" r="4" fill="#2270c0"/><circle cx="12" cy="193" r="2" fill="#111"/>

<!-- layout tab -->
<rect x="540.500" y="146.500" width="15" height="15" fill="#fff" stroke="#333"/><rect x="540" y="146" width="16" height="5" fill="#333"/>
<use href="#ws" x="618" y="148"/>
<!-- view toolbar -->
<g>
<rect x="535" y="172" width="16" height="15" rx="2" fill="#bbb"/><circle cx="543" cy="180" r="4.500" fill="#7fb6dc" stroke="#eee" stroke-width="2"/><path d="M533 175v-4h4M549 171h4v4M533 186v4h4M549 190h4v-4" stroke="#bbb" fill="none"/>
<path d="M560 172V188M643 172V188" stroke="#d0d0d0"/>
<g fill="none" stroke="#999" stroke-dasharray="2 2"><rect x="567" y="172.500" width="16" height="15"/><rect x="593" y="172.500" width="16" height="15"/><rect x="619" y="172.500" width="16" height="15"/><rect x="650" y="172.500" width="16" height="15"/><rect x="677.500" y="172.500" width="15" height="15"/></g>
<path d="M575 176v8M571 180h8" stroke="#7cb560" stroke-width="3"/>
<path d="M596 180h10" stroke="#dd2020" stroke-width="3.500"/>
<path d="M625 174v6M622 177h6" stroke="#7cb560" stroke-width="2.500"/><path d="M622 183h8" stroke="#dd2020" stroke-width="3"/><path d="M631 186l4 3" stroke="#444" stroke-width="2"/>
<g fill="#a85a44"><circle cx="655" cy="176" r="1.500"/><circle cx="661" cy="178" r="1.500"/><circle cx="654" cy="181" r="1.500"/><circle cx="659" cy="183" r="1.500"/><circle cx="663" cy="184" r="1.500"/></g>
<path d="M686 182l4 4" stroke="#7cb560" stroke-width="3"/>
<rect x="705" y="175" width="12" height="14" rx="1" fill="#bdbdbd"/><rect x="704" y="172" width="14" height="3" rx="1" fill="#bbb"/><path d="M708 176v12M711 176v12M714 176v12" stroke="#d8d8d8"/>
</g>
<!-- view buttons -->
<rect x="2458.500" y="174" width="12" height="13" fill="#cdd6ec" stroke="#999"/><path d="M2464.500 174v13" stroke="#888"/>
<rect x="2484.500" y="174" width="13" height="13" fill="#cdd6ec" stroke="#999"/><path d="M2484 180.500h14" stroke="#888"/>
<rect x="2510" y="172.500" width="17" height="16" fill="#fff" stroke="#333" stroke-width="1.500"/><rect x="2510" y="172" width="17" height="5" fill="#333"/>
<use href="#ws" x="2539" y="174"/>

<!-- props -->
<g transform="translate(47,659)"><path d="M1 6l5-2 4 2v8l-4 2-5-2z" fill="#bbb" stroke="#777"/><polygon points="13,1 7,2 9,4 7,7 9,9 11,6 13,8" fill="#9ccb80" stroke="#6a9a52"/></g>
<circle cx="180" cy="667" r="5.500" fill="none" stroke="#a8a8a8" stroke-width="2.300"/><path d="M176 671l8-8" stroke="#a8a8a8" stroke-width="2.300"/>
<path d="M301 663l8 8M309 663l-8 8" stroke="#e02028" stroke-width="3.500"/>
<path d="M447 664c0-4 8-4 8 0 0 3-4 3-4 6v2" fill="none" stroke="#9cc37e" stroke-width="2.300"/><circle cx="451" cy="675" r="1.300" fill="#9cc37e"/>
<g transform="translate(-1 0)"><circle cx="502.500" cy="698" r="6" fill="none" stroke="#bbb" stroke-width="2.500" stroke-dasharray="2.500 1"/><circle cx="502.500" cy="698" r="3" fill="#ccc"/></g>

<rect x="20" y="727" width="14" height="4" fill="#3f9bd0"/><rect x="20" y="867" width="14" height="4" fill="#3f9bd0"/>
<g transform="translate(-1 0)"><use href="#cpy" x="381" y="720"/><use href="#pst" x="413" y="720"/>
<path d="M455 724a6 6 0 0 0-10 3M448 734a6 6 0 0 0 10-3" fill="none" stroke="#aaa" stroke-width="2.200"/><polygon points="453,726 458,722 459,727" fill="#aaa"/><polygon points="450,732 445,736 444,731" fill="#aaa"/>
<rect x="480" y="722" width="13" height="14" fill="#bbb" stroke="#aaa"/><rect x="483" y="722" width="7" height="5" fill="#eee"/><rect x="482" y="730" width="9" height="6" fill="#999"/>
<use href="#cpy" x="381" y="858"/><use href="#pst" x="413" y="858"/>
<path d="M460 862a6.500 6.500 0 0 0-11 3M449 872a6.500 6.500 0 0 0 11-3" fill="none" stroke="#2a80b8" stroke-width="2.200" transform="translate(-.5 0)"/><polygon points="457,864 462,860 463,865" fill="#2a80b8"/><polygon points="451,870 446,874 445,869" fill="#2a80b8"/>
<rect x="480" y="860" width="13" height="14" fill="#3a7fc8" stroke="#2a60a0"/><rect x="483" y="860" width="7" height="5" fill="#eee"/><rect x="482" y="868" width="9" height="6" fill="#444"/></g>

<polygon points="503,725 511,725 507,720" fill="#444"/>
<polygon points="503,1392 511,1392 507,1397" fill="#444"/>

<!-- array list -->
<rect x="13.500" y="753.500" width="13" height="13" fill="#fff" stroke="#999"/><use href="#cm" x="13" y="753"/>
<circle cx="490" cy="760" r="6" fill="#fff" stroke="#2c90c8" stroke-width="1.300"/><polygon points="487,758 493,758 490,763" fill="#2c90c8"/>
<rect x="13.500" y="773.500" width="13" height="13" fill="#fff" stroke="#999"/><use href="#cm" x="13" y="773"/>
<rect x="13.500" y="792.500" width="13" height="13" fill="#fff" stroke="#999"/><use href="#cm" x="13" y="792"/>
<rect x="13.500" y="811.500" width="13" height="13" fill="#fff" stroke="#999"/><use href="#cm" x="13" y="811"/>
<use href="#dt" x="34" y="772"/><use href="#dt" x="34" y="791"/><use href="#dt" x="34" y="810"/>

<circle cx="106" cy="899" r="2.500" fill="#f0b820"/>
<polygon points="484,897 492,897 488,902" fill="#444"/>
<polygon points="484,982 492,982 488,987" fill="#444"/>

<!-- series table icons -->
<rect x="13.500" y="1033" width="13" height="13" fill="#fff" stroke="#888"/><rect x="15.500" y="1035" width="9" height="9" fill="#777"/>
<use href="#se" x="89" y="1032"/>
<g stroke="#333" stroke-width=".8">
<circle cx="59.500" cy="1064" r="7.500" fill="#a65628"/>
<circle cx="59.500" cy="1094" r="7.500" fill="#4daf4a"/>
<circle cx="59.500" cy="1124" r="7.500" fill="#984ea3"/>
<circle cx="59.500" cy="1154" r="7.500" fill="#ff7f00"/>
<circle cx="59.500" cy="1184" r="7.500" fill="#000"/>
<circle cx="59.500" cy="1214" r="7.500" fill="#e41a1c"/>
<circle cx="59.500" cy="1244" r="7.500" fill="#377eb8"/>
</g>
<use href="#se" x="90" y="1056"/><use href="#se" x="90" y="1086"/><use href="#se" x="90" y="1116"/><use href="#se" x="90" y="1146"/><use href="#se" x="90" y="1176"/><use href="#se" x="90" y="1206"/><use href="#se" x="90" y="1236"/>
<use href="#cm" x="13" y="1177"/><use href="#cm" x="13" y="1207"/><use href="#cm" x="13" y="1237"/>

<g transform="translate(-1 0)">
<path d="M481 1034h5l1 2h9v11h-15z" fill="#f5dc80" stroke="#a08a3c"/><path d="M488 1041c0-2 3-2 3 0 0-2 3-2 3 0 0 2-3 4-3 5-0-1-3-3-3-5z" fill="#e02030" stroke="#e02030"/>
<path d="M481 1061h5l1 2h9v11h-15z" fill="#f5dc80" stroke="#a08a3c"/><polygon points="490,1059 494,1059 494,1063 497,1063 492,1069 487,1063 490,1063" fill="#9ccb80" stroke="#6a9a52"/>
<path d="M481 1088h5l1 2h9v11h-15z" fill="#f5dc80" stroke="#a08a3c"/><polygon points="490,1086 494,1086 494,1090 497,1090 492,1096 487,1090 490,1090" fill="#9ccb80" stroke="#6a9a52"/><path d="M485 1096v7M481.500 1099.500h7" stroke="#2a8fd0" stroke-width="2.500"/>
</g>

<!-- disabled arrows -->
<path d="M488.500 1298V1319" stroke="#ccc"/>
<polygon points="488,1307 496,1307 492,1302" fill="#c4c4c4"/><polygon points="488,1312 496,1312 492,1317" fill="#c4c4c4"/>
<polygon points="484,1336 492,1336 488,1341" fill="#c4c4c4"/>
<polygon points="484,1365 492,1365 488,1370" fill="#c4c4c4"/>
<path d="M488.500 1385V1401" stroke="#ccc"/>
<polygon points="488,1394 496,1394 492,1389" fill="#c4c4c4"/>
<path d="M858 1421l6 6M864 1421l-6 6" stroke="#333" stroke-width="1.500"/>
</svg>

<!-- TEXT -->
<div class="t" style="left:10px;top:3px"><u>F</u>ile</div>
<div class="t" style="left:43px;top:3px"><u>E</u>dit</div>
<div class="t" style="left:79px;top:3px"><u>V</u>iew</div>
<div class="t" style="left:120px;top:3px"><u>S</u>ources</div>
<div class="t" style="left:179px;top:3px">Fi<u>l</u>ters</div>
<div class="t" style="left:227px;top:3px"><u>E</u>xtractors</div>
<div class="t" style="left:297px;top:3px"><u>T</u>ools</div>
<div class="t" style="left:341px;top:3px"><u>C</u>atalyst</div>
<div class="t" style="left:401px;top:3px"><u>M</u>acros</div>
<div class="t" style="left:457px;top:3px"><u>H</u>elp</div>

<div class="t" style="left:705px;top:33px">Time:</div>
<div class="t" style="left:743px;top:33px">5</div>
<div class="t" style="left:832px;top:33px">50</div>
<div class="t" style="left:883px;top:33px">max is 50</div>
<div class="t g" style="left:486px;top:72px;font-size:13px">Representation</div>

<div class="t" style="left:4px;top:140px">Pipeline Browser</div>
<div class="t" style="left:59px;top:164px">builtin:</div>
<div class="t" style="left:59px;top:185px;color:#fff;font-weight:bold;font-size:12.800px">output.pvd</div>

<div class="t" style="left:560px;top:146px;font-size:12.600px">Layout #1</div>
<div class="t" style="left:653px;top:146px;">+</div>
<div class="t" style="left:2345px;top:173px;font-weight:bold;font-size:12.600px;text-decoration:underline">LineChartView1</div>

<div class="t" style="left:12px;top:603px">Properties</div>
<div class="t" style="left:94px;top:604px">Information</div>
<div class="t" style="left:4px;top:628px">Properties</div>
<div class="t" style="left:63px;top:659px;font-size:12.800px">Apply</div>
<div class="t g" style="left:191px;top:659px;font-size:12.800px">Reset</div>
<div class="t" style="left:315px;top:659px;font-size:12.800px">Delete</div>
<div class="t" style="left:12px;top:690px;color:#8a8a8a">Search ... (use Esc to clear text)</div>
<div class="t bd" style="left:41px;top:722px;font-size:12.700px">Properties (output.pvd)</div>
<div class="t" style="left:32.500px;top:752px">Point/Cell/Column Array Status</div>
<div class="t" style="left:55px;top:772px">residual</div>
<div class="t" style="left:55px;top:791px">u</div>
<div class="t" style="left:55px;top:810px">u_dot</div>
<div class="t bd" style="left:41px;top:860px;font-size:12.400px">Display (XYChartRepresentation)</div>
<div class="t" style="left:9px;top:891px">Attribute Type</div>
<div class="t" style="left:117px;top:891px">Point Data</div>
<div class="t bd" style="left:9px;top:921px;">X Axis Parameters</div>
<div class="t" style="left:28px;top:947px">Use Index For X Axis</div>
<div class="t" style="left:9px;top:975px">X Array Name</div>
<div class="t" style="left:97px;top:975px">Points_Magnitude</div>
<div class="t bd" style="left:9px;top:1005px">Series Parameters</div>
<div class="t" style="left:165px;top:1031px">Variable</div>
<div class="t" style="left:322px;top:1031px">Legend Name</div>
<div class="t" style="left:149px;top:1056px">Points_Magnitude</div><div class="t" style="left:277px;top:1056px">Points_Magnitude</div>
<div class="t" style="left:149px;top:1086px">Points_X</div><div class="t" style="left:277px;top:1086px">Points_X</div>
<div class="t" style="left:149px;top:1116px">Points_Y</div><div class="t" style="left:277px;top:1116px">Points_Y</div>
<div class="t" style="left:149px;top:1146px">Points_Z</div><div class="t" style="left:277px;top:1146px">Points_Z</div>
<div class="t" style="left:149px;top:1176px">residual</div><div class="t" style="left:277px;top:1176px">residual</div>
<div class="t" style="left:149px;top:1206px">u</div><div class="t" style="left:277px;top:1206px">u</div>
<div class="t" style="left:149px;top:1236px">u_dot</div><div class="t" style="left:277px;top:1236px">u_dot</div>
<div class="t" style="left:9px;top:1300px">Line Thickness</div>
<div class="t g" style="left:261px;top:1300px">1.0</div>
<div class="t" style="left:9px;top:1329px">Line Style</div>
<div class="t g" style="left:261px;top:1329px">None</div>
<div class="t" style="left:9px;top:1358px">Marker Style</div>
<div class="t g" style="left:261px;top:1358px">None</div>
<div class="t" style="left:9px;top:1388px">Marker Size</div>
<div class="t g" style="left:261px;top:1388px">1.0</div>
</body></html>
